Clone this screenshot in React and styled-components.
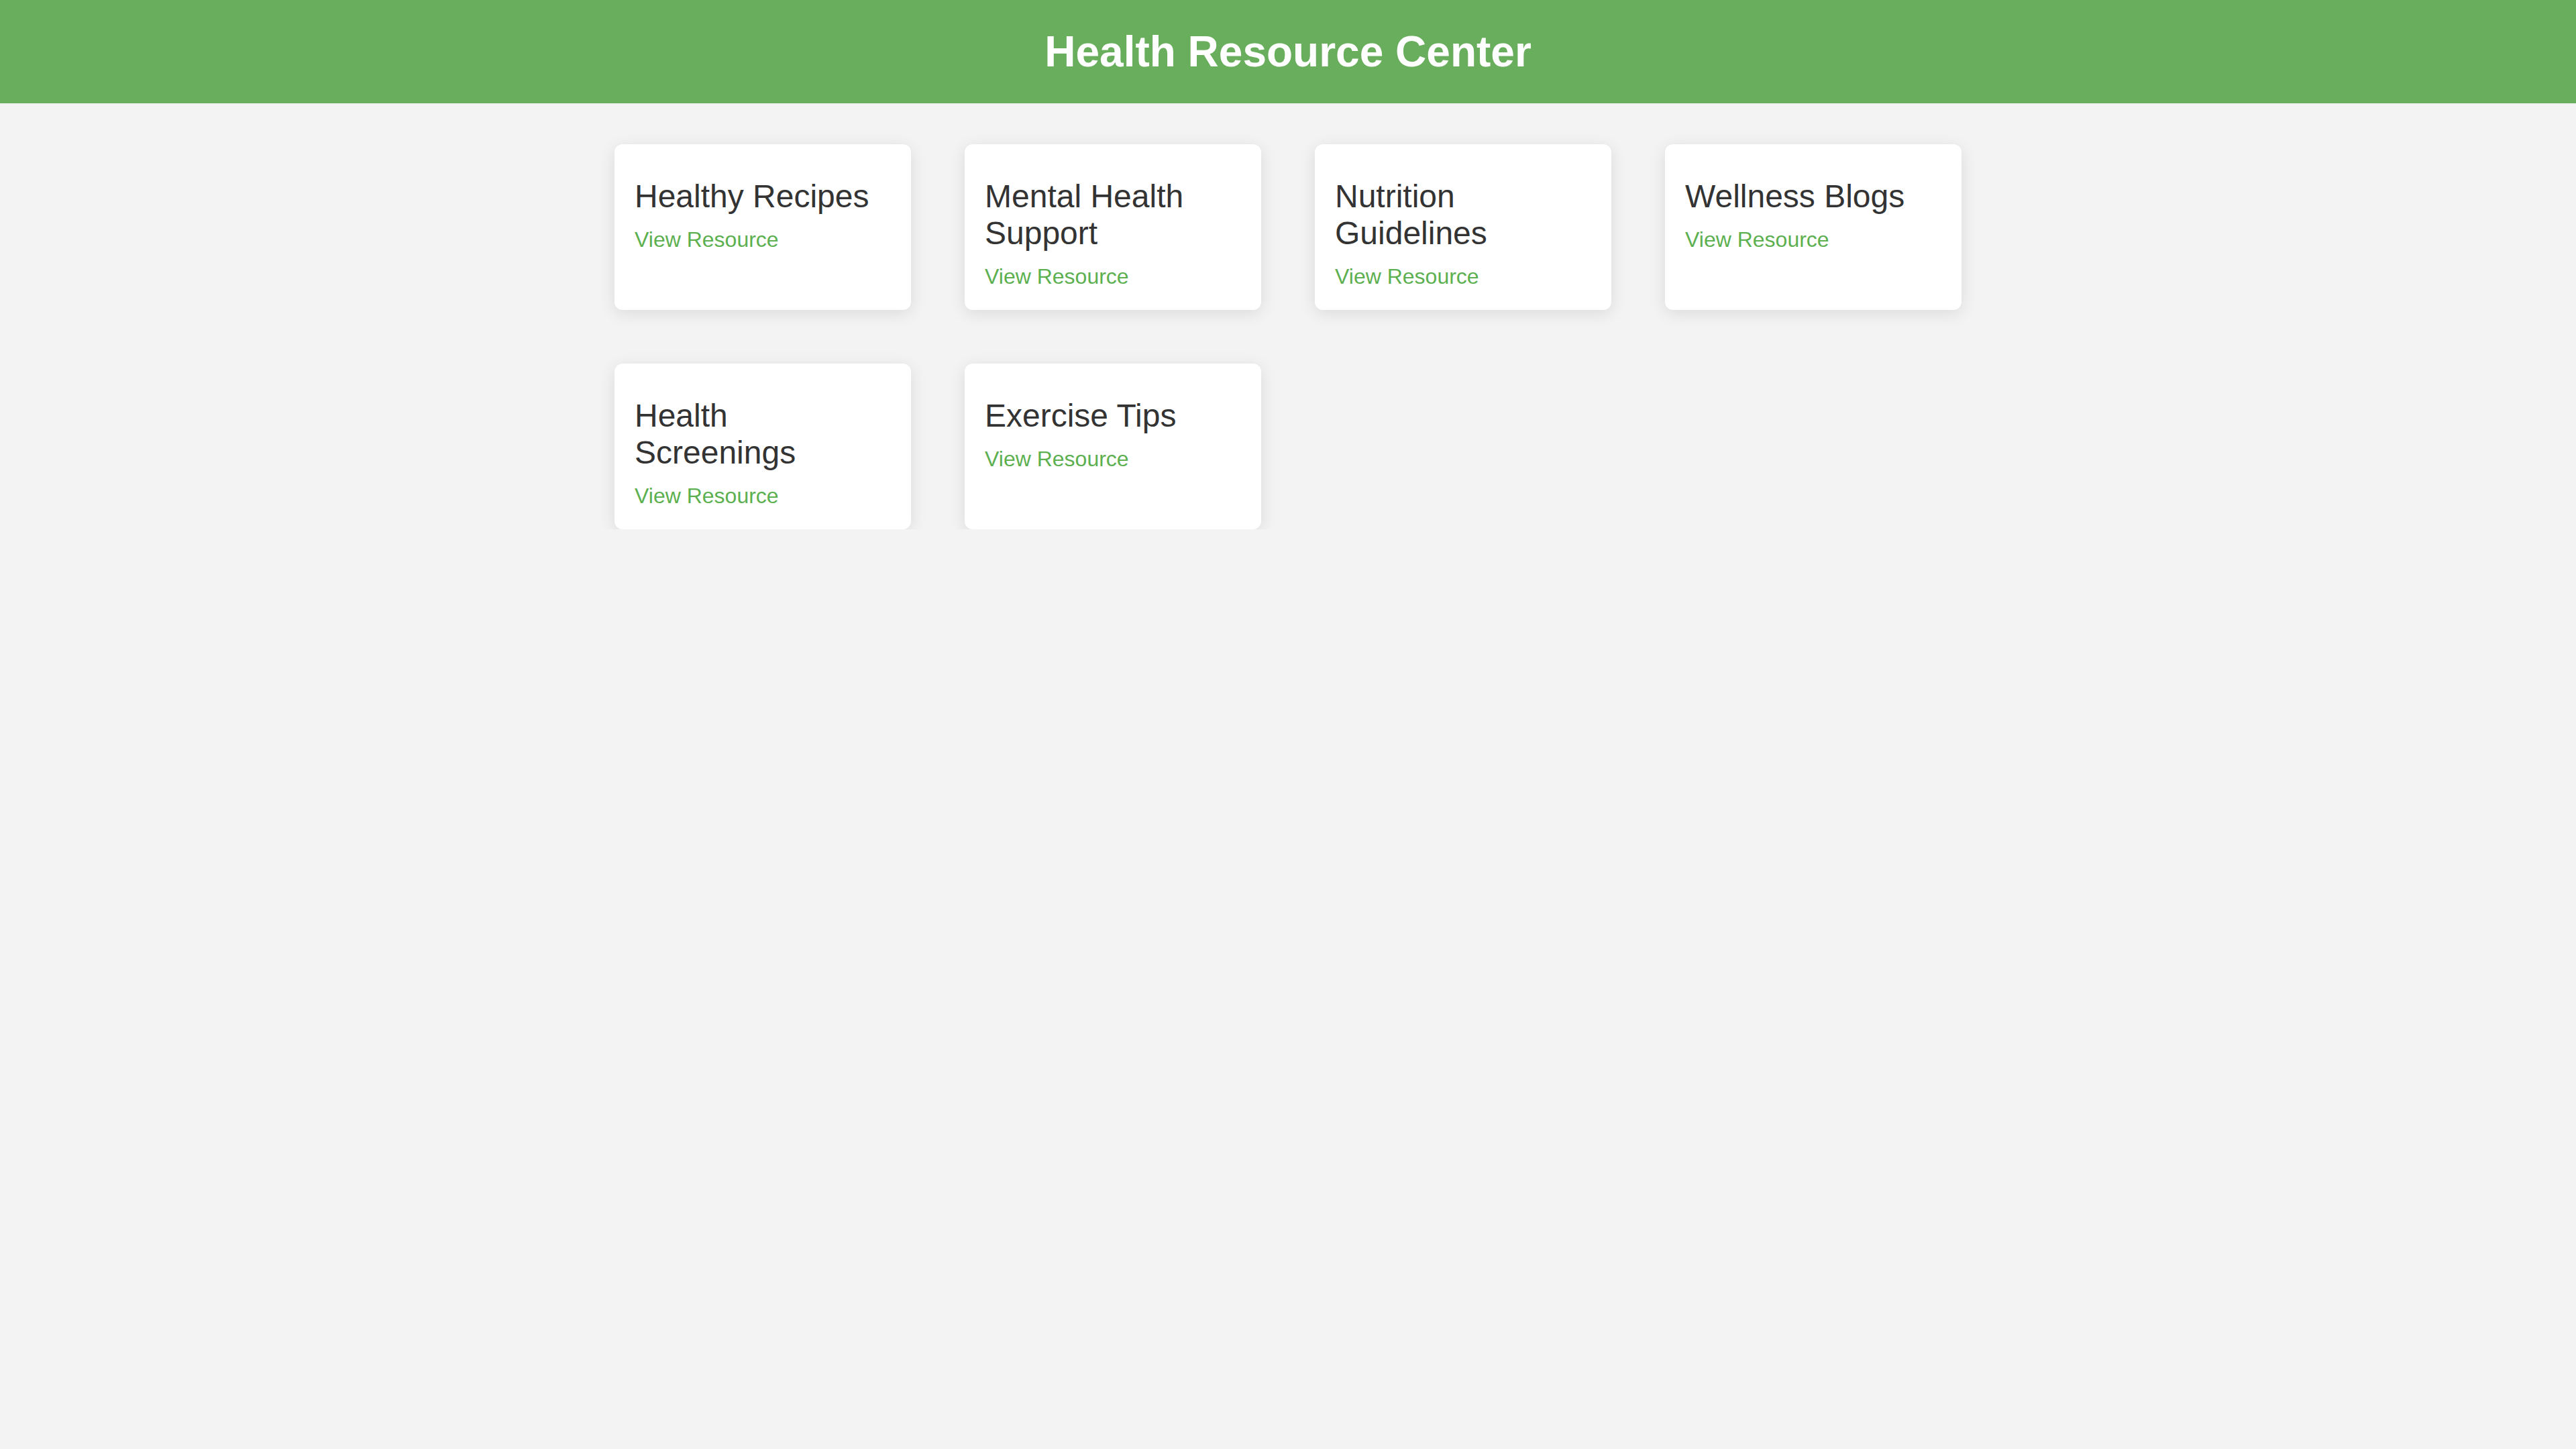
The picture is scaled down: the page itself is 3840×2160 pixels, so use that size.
import React from "react";
import styled, { createGlobalStyle } from "styled-components";

const GlobalStyle = createGlobalStyle`
  html, body {
    margin: 0;
    padding: 0;
    background: #f3f3f3;
    font-family: "Liberation Sans", Arial, Helvetica, sans-serif;
  }
  * { box-sizing: border-box; }
`;

const Header = styled.header`
  background: #69ae5d;
  height: 154px;
  display: flex;
  align-items: center;
  justify-content: center;
`;

const Title = styled.h1`
  margin: 0;
  color: #ffffff;
  font-size: 64px;
  font-weight: 700;
  line-height: normal;
`;

const Grid = styled.main`
  display: grid;
  grid-template-columns: repeat(4, 442px);
  gap: 80px;
  justify-content: center;
  padding-top: 61px;
`;

const Card = styled.div`
  background: #ffffff;
  border-radius: 12px;
  box-shadow: 0 5px 24px rgba(0, 0, 0, 0.1);
  padding: 30px;
  min-height: 247px;
`;

const CardTitle = styled.h3`
  margin: 20px 0 20px;
  color: #333333;
  font-size: 48px;
  font-weight: 400;
  line-height: normal;
`;

const Link = styled.a`
  display: block;
  color: #5cb050;
  font-size: 32px;
  line-height: 35px;
  text-decoration: none;
`;

const resources = [
  "Healthy Recipes",
  "Mental Health Support",
  "Nutrition Guidelines",
  "Wellness Blogs",
  "Health Screenings",
  "Exercise Tips",
];

export default function App() {
  return (
    <>
      <GlobalStyle />
      <Header>
        <Title>Health Resource Center</Title>
      </Header>
      <Grid>
        {resources.map((r) => (
          <Card key={r}>
            <CardTitle>{r}</CardTitle>
            <Link href="#">View Resource</Link>
          </Card>
        ))}
      </Grid>
    </>
  );
}
